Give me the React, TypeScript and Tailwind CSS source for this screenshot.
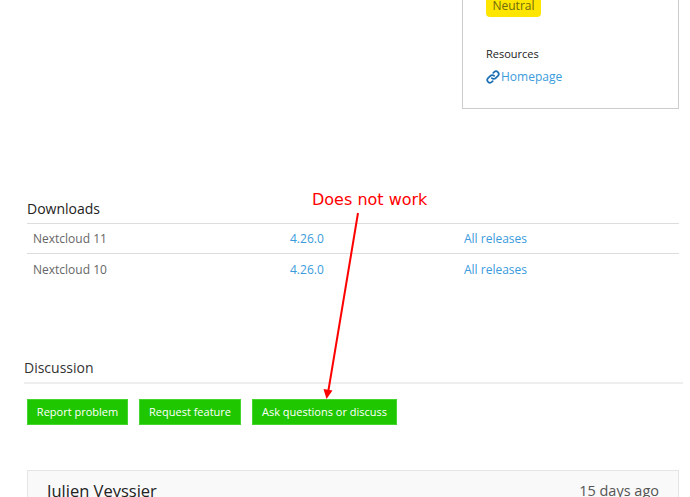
const font = { fontFamily: '"Open Sans", sans-serif' };

function LinkIcon() {
  return (
    <svg viewBox="0 0 24 24" className="h-[14px] w-[14px]" fill="none" stroke="#1b6fb5" strokeWidth="3" strokeLinecap="round" strokeLinejoin="round">
      <path d="M10 14a4.5 4.5 0 0 0 6.5 0l4-4a4.6 4.6 0 0 0-6.5-6.5l-1.5 1.5" />
      <path d="M14 10a4.5 4.5 0 0 0-6.5 0l-4 4a4.6 4.6 0 0 0 6.5 6.5l1.5-1.5" />
    </svg>
  );
}

function DownloadRow({ name }: { name: string }) {
  return (
    <div className="flex h-[30px] items-center border-b border-[#dddddd] pl-[6px] pt-[1px] text-[12px] last:border-b-0">
      <span className="w-[257px] text-[#666666]">{name}</span>
      <a className="w-[174px] text-[#3a9bdc]">4.26.0</a>
      <a className="text-[#3a9bdc]">All releases</a>
    </div>
  );
}

function GreenButton({ label, width }: { label: string; width: string }) {
  return (
    <button className={`h-[26px] ${width} border border-[#44d62c] bg-[#1fc700] text-center text-[11px] text-white`}>
      {label}
    </button>
  );
}

export default function App() {
  return (
    <div className="relative h-[497px] w-[690px] overflow-hidden bg-white" style={font}>
      <div className="flex justify-end pr-[11px]">
        <div className="h-[109px] w-[217px] border-b border-l border-r border-[#cccccc] pl-[23px]">
          <span className="block h-[17px] w-[55px] rounded-b-[4px] bg-[#ffe600] text-center text-[12px] leading-[11px] text-[#6f6a10]">
            Neutral
          </span>
          <h4 className="mt-[29px] text-[11px] leading-4 text-[#222222]">Resources</h4>
          <a className="mt-[6px] flex items-center gap-[1px] text-[12px] leading-[18px] text-[#3a9bdc]">
            <LinkIcon />
            <span>Homepage</span>
          </a>
        </div>
      </div>

      <section className="ml-[27px] mr-[11px] mt-[90px]">
        <h3 className="h-[25px] border-b border-[#dddddd] text-[14px] leading-[19px] text-[#222222]">Downloads</h3>
        <DownloadRow name="Nextcloud 11" />
        <DownloadRow name="Nextcloud 10" />
      </section>

      <section className="ml-[24px] mr-[7px] mt-[74px]">
        <h3 className="h-[26px] border-b-2 border-[#eeeeee] text-[14px] leading-[19px] text-[#333333]">Discussion</h3>
        <div className="ml-[3px] mt-[15px] flex gap-[11px]">
          <GreenButton label="Report problem" width="w-[101px]" />
          <GreenButton label="Request feature" width="w-[102px]" />
          <GreenButton label="Ask questions or discuss" width="w-[145px]" />
        </div>
      </section>

      <section className="ml-[27px] mr-[11px] mt-[45px] flex h-[60px] items-start justify-between border border-[#e5e5e5] bg-[#f9f9f9] pl-[19px] pr-[19px] pt-[8px]">
        <span className="text-[16.5px] font-medium leading-6 text-[#222222]">Julien Veyssier</span>
        <span className="text-[14.5px] leading-6 text-[#555555]">15 days ago</span>
      </section>

      <span
        className="absolute left-[312px] top-[190px] whitespace-nowrap text-[16px] leading-5 text-[#ff0000]"
        style={{ fontFamily: '"DejaVu Sans", sans-serif' }}
      >
        Does not work
      </span>
      <svg className="absolute left-[315px] top-[205px] h-[200px] w-[55px]" viewBox="0 0 55 200" fill="none">
        <path d="M43 8 L13 188" stroke="#ff0000" strokeWidth="2" />
        <path d="M8.5 184 L17.5 185.5 L11.5 194 Z" fill="#ff0000" />
      </svg>
    </div>
  );
}
